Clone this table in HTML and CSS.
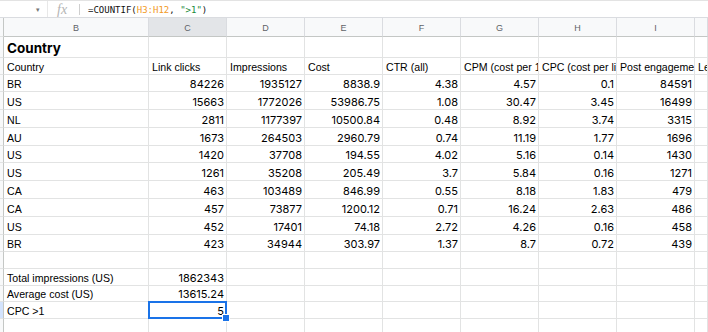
FILE: index.html
```html
<!DOCTYPE html>
<html>
<head>
<meta charset="utf-8">
<link rel="stylesheet" href="styles.css">
</head>
<body>
<div class="fbar">
  <div class="namebox"><span class="caret">▾</span></div>
  <div class="fx">fx</div>
  <div class="formula">=COUNTIF(<span class="rng">H3:H12</span>, <span class="str">"&gt;1"</span>)</div>
</div>
<div class="sheet">
  <div class="ch rh"></div><div class="ch">B</div><div class="ch on">C</div><div class="ch">D</div><div class="ch">E</div><div class="ch">F</div><div class="ch">G</div><div class="ch">H</div><div class="ch">I</div><div class="ch"></div>

  <div class="rh"></div><div class="c title">Country</div><div class="c"></div><div class="c"></div><div class="c"></div><div class="c"></div><div class="c"></div><div class="c"></div><div class="c"></div><div class="c"></div>

  <div class="rh"></div><div class="c">Country</div><div class="c">Link clicks</div><div class="c">Impressions</div><div class="c">Cost</div><div class="c">CTR (all)</div><div class="c">CPM (cost per 1000 impressions)</div><div class="c">CPC (cost per link click)</div><div class="c">Post engagement</div><div class="c">Leads</div>

  <div class="rh"></div><div class="c">BR</div><div class="c n">84226</div><div class="c n">1935127</div><div class="c n">8838.9</div><div class="c n">4.38</div><div class="c n">4.57</div><div class="c n">0.1</div><div class="c n">84591</div><div class="c"></div>
  <div class="rh"></div><div class="c">US</div><div class="c n">15663</div><div class="c n">1772026</div><div class="c n">53986.75</div><div class="c n">1.08</div><div class="c n">30.47</div><div class="c n">3.45</div><div class="c n">16499</div><div class="c"></div>
  <div class="rh"></div><div class="c">NL</div><div class="c n">2811</div><div class="c n">1177397</div><div class="c n">10500.84</div><div class="c n">0.48</div><div class="c n">8.92</div><div class="c n">3.74</div><div class="c n">3315</div><div class="c"></div>
  <div class="rh"></div><div class="c">AU</div><div class="c n">1673</div><div class="c n">264503</div><div class="c n">2960.79</div><div class="c n">0.74</div><div class="c n">11.19</div><div class="c n">1.77</div><div class="c n">1696</div><div class="c"></div>
  <div class="rh"></div><div class="c">US</div><div class="c n">1420</div><div class="c n">37708</div><div class="c n">194.55</div><div class="c n">4.02</div><div class="c n">5.16</div><div class="c n">0.14</div><div class="c n">1430</div><div class="c"></div>
  <div class="rh"></div><div class="c">US</div><div class="c n">1261</div><div class="c n">35208</div><div class="c n">205.49</div><div class="c n">3.7</div><div class="c n">5.84</div><div class="c n">0.16</div><div class="c n">1271</div><div class="c"></div>
  <div class="rh"></div><div class="c">CA</div><div class="c n">463</div><div class="c n">103489</div><div class="c n">846.99</div><div class="c n">0.55</div><div class="c n">8.18</div><div class="c n">1.83</div><div class="c n">479</div><div class="c"></div>
  <div class="rh"></div><div class="c">CA</div><div class="c n">457</div><div class="c n">73877</div><div class="c n">1200.12</div><div class="c n">0.71</div><div class="c n">16.24</div><div class="c n">2.63</div><div class="c n">486</div><div class="c"></div>
  <div class="rh"></div><div class="c">US</div><div class="c n">452</div><div class="c n">17401</div><div class="c n">74.18</div><div class="c n">2.72</div><div class="c n">4.26</div><div class="c n">0.16</div><div class="c n">458</div><div class="c"></div>
  <div class="rh"></div><div class="c">BR</div><div class="c n">423</div><div class="c n">34944</div><div class="c n">303.97</div><div class="c n">1.37</div><div class="c n">8.7</div><div class="c n">0.72</div><div class="c n">439</div><div class="c"></div>

  <div class="rh"></div><div class="c"></div><div class="c"></div><div class="c"></div><div class="c"></div><div class="c"></div><div class="c"></div><div class="c"></div><div class="c"></div><div class="c"></div>
  <div class="rh"></div><div class="c">Total impressions (US)</div><div class="c n">1862343</div><div class="c"></div><div class="c"></div><div class="c"></div><div class="c"></div><div class="c"></div><div class="c"></div><div class="c"></div>
  <div class="rh"></div><div class="c">Average cost (US)</div><div class="c n">13615.24</div><div class="c"></div><div class="c"></div><div class="c"></div><div class="c"></div><div class="c"></div><div class="c"></div><div class="c"></div>
  <div class="rh on"></div><div class="c">CPC &gt;1</div><div class="c n sel">5</div><div class="c"></div><div class="c"></div><div class="c"></div><div class="c"></div><div class="c"></div><div class="c"></div><div class="c"></div>
  <div class="rh"></div><div class="c"></div><div class="c"></div><div class="c"></div><div class="c"></div><div class="c"></div><div class="c"></div><div class="c"></div><div class="c"></div><div class="c"></div>
</div>
</body>
</html>
```

FILE: styles.css
```css
* { box-sizing: border-box; }
html, body { margin: 0; padding: 0; background: #fff; }
body {
  width: 708px;
  height: 332px;
  overflow: hidden;
  font-family: "Liberation Sans", Arial, sans-serif;
  color: #000;
}

.fbar {
  height: 18px;
  border-top: 1px solid #e3e3e3;
  border-bottom: 1px solid #dadce0;
  display: flex;
  align-items: center;
}
.namebox {
  width: 48px;
  height: 100%;
  border-right: 1px solid #e8e8e8;
  display: flex;
  align-items: center;
  justify-content: flex-end;
  padding-right: 7px;
}
.caret { font-size: 7px; color: #777; line-height: 1; }
.fx {
  width: 32px;
  height: 11px;
  border-right: 1px solid #cfcfcf;
  padding-left: 9px;
  font-family: "Liberation Serif", serif;
  font-style: italic;
  font-size: 14px;
  line-height: 11px;
  color: #b4b4b4;
}
.formula {
  padding-left: 8px;
  padding-top: 1px;
  font-family: "DejaVu Sans Mono", monospace;
  font-size: 9px;
  color: #111;
  white-space: nowrap;
}
.rng { color: #f29a1e; }
.str { color: #1a8a3b; }

.sheet {
  display: grid;
  grid-template-columns: 4px 145px repeat(7, 78px) 1fr;
  grid-template-rows: 19px 21px 16.5px repeat(10, 17.8px) repeat(5, 16.6px);
}
.ch {
  background: #f8f9fa;
  border-right: 1px solid #dadce0;
  border-bottom: 1px solid #c4c7c5;
  font-size: 9px;
  color: #5f6368;
  display: flex;
  align-items: center;
  justify-content: center;
  padding-top: 1px;
}
.ch.on { background: #e3e5e8; }
.rh {
  background: #f8f9fa;
  border-right: 1px solid #c4c7c5;
  border-bottom: 1px solid #e2e3e3;
}
.rh.on { background: #d3e3fd; }
.c {
  border-right: 1px solid #e2e3e3;
  border-bottom: 1px solid #e2e3e3;
  font-size: 10.6px;
  line-height: 12px;
  padding: 0 0 1px 3px;
  white-space: nowrap;
  overflow: hidden;
  display: flex;
  align-items: flex-end;
}
.c.n {
  justify-content: flex-end;
  padding-right: 2px;
  font-family: Inter, "Liberation Sans", sans-serif;
  font-size: 11px;
}
.c.title {
  font-family: Inter, "Liberation Sans", sans-serif;
  font-size: 13.5px;
  font-weight: 700;
  line-height: 16px;
  padding-bottom: 1px;
}
.c.sel { position: relative; overflow: visible; }
.c.sel::before {
  content: "";
  position: absolute;
  left: -1px;
  top: -1px;
  right: -1px;
  bottom: -1px;
  border: 2px solid #1a73e8;
}
.c.sel::after {
  content: "";
  position: absolute;
  right: -4px;
  bottom: -4px;
  width: 6px;
  height: 6px;
  background: #1a73e8;
  border: 1px solid #fff;
  z-index: 2;
}
```
